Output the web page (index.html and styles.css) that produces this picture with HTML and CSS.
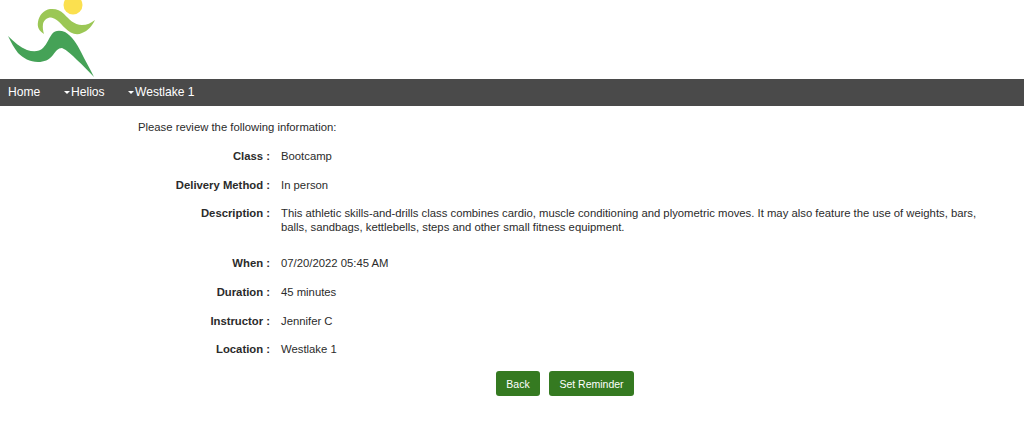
FILE: index.html
```html
<!DOCTYPE html>
<html lang="en">
<head>
<meta charset="utf-8">
<title>Review</title>
<link rel="stylesheet" href="styles.css">
</head>
<body>
<header class="brand">
<svg class="logo" viewBox="0 0 100 79" width="100" height="79" aria-hidden="true">
<circle cx="73" cy="5" r="9.5" fill="#fbe04f"/>
<path d="M44 34 C39 31 37 27 38 22 C39 15 44 10 50 9 C56 8.500 60 10 64 14 C69 19 74 25 82 25 C87 25 91 23 95 20 C92 26 88 31 82 33 C76 36 70 33 65 28 C60 23 56 18 51 17.500 C47 17.500 44 20 43 24 C42.500 27 43 31 44 34Z" fill="#9bc755"/>
<path d="M8 36 C14 42 20 47 27 50 C33 52 39 52 43 48 C47 44 49 38 52 34 C55 30 60 30 65 32 C72 36 77 44 81 52 C85 60 90 69 94 77 C88 71 83 65 77 60 C72 55 67 50 62 48 C58 48 56 51 53 55 C49 60 44 62 38 62 C30 62 23 58 18 53 C14 48 11 42 8 36Z" fill="#45a257"/>
</svg>
</header>
<nav class="menu">
<a class="menu-item home">Home</a>
<a class="menu-item helios"><span class="caret"></span>Helios</a>
<a class="menu-item"><span class="caret"></span>Westlake 1</a>
</nav>
<main class="content">
<p class="intro">Please review the following information:</p>
<dl class="details">
<div class="row"><dt>Class :</dt><dd>Bootcamp</dd></div>
<div class="row"><dt>Delivery Method :</dt><dd>In person</dd></div>
<div class="row desc"><dt>Description :</dt><dd>This athletic skills-and-drills class combines cardio, muscle conditioning and plyometric moves. It may also feature the use of weights, bars, balls, sandbags, kettlebells, steps and other small fitness equipment.</dd></div>
<div class="row"><dt>When :</dt><dd>07/20/2022 05:45 AM</dd></div>
<div class="row"><dt>Duration :</dt><dd>45 minutes</dd></div>
<div class="row"><dt>Instructor :</dt><dd>Jennifer C</dd></div>
<div class="row"><dt>Location :</dt><dd>Westlake 1</dd></div>
</dl>
<div class="actions">
<button class="btn back" type="button">Back</button>
<button class="btn remind" type="button">Set Reminder</button>
</div>
</main>
</body>
</html>
```
FILE: styles.css
```css
* { box-sizing: border-box; }
html, body { margin: 0; padding: 0; }
body { background: #fff; color: #2b2b2b; font-family: "Liberation Sans", Arial, sans-serif; font-size: 11.300px; overflow: hidden; height: 425px; }
.brand { height: 79px; }
.logo { display: block; }
.menu { display: flex; height: 27px; background: #4a4a4a; color: #fff; font-size: 12.100px; line-height: 27px; padding-left: 8px; }
.menu-item { display: block; white-space: nowrap; }
.home { width: 56px; }
.helios { width: 64px; }
.caret { display: inline-block; width: 0; height: 0; margin-right: 1px; vertical-align: middle; border-left: 3px solid transparent; border-right: 3px solid transparent; border-top: 3px solid #fff; }
.content { padding: 14px 32px 0 138px; line-height: 14px; }
.intro { margin: 0; }
.details { margin: 15px 0 0; }
.row { display: flex; margin-bottom: 14.700px; }
.row.desc { margin-bottom: 22px; }
dt { width: 132px; flex: none; text-align: right; font-weight: bold; }
dd { margin: 0 0 0 11px; }
.actions { display: flex; justify-content: flex-start; gap: 9px; margin: 0 0 0 358px; }
.btn { height: 25px; padding: 0; border: 0; border-radius: 3px; background: #357a21; color: #fff; font: 10.500px "Liberation Sans", Arial, sans-serif; }
.back { width: 44px; }
.remind { width: 85px; }
```
